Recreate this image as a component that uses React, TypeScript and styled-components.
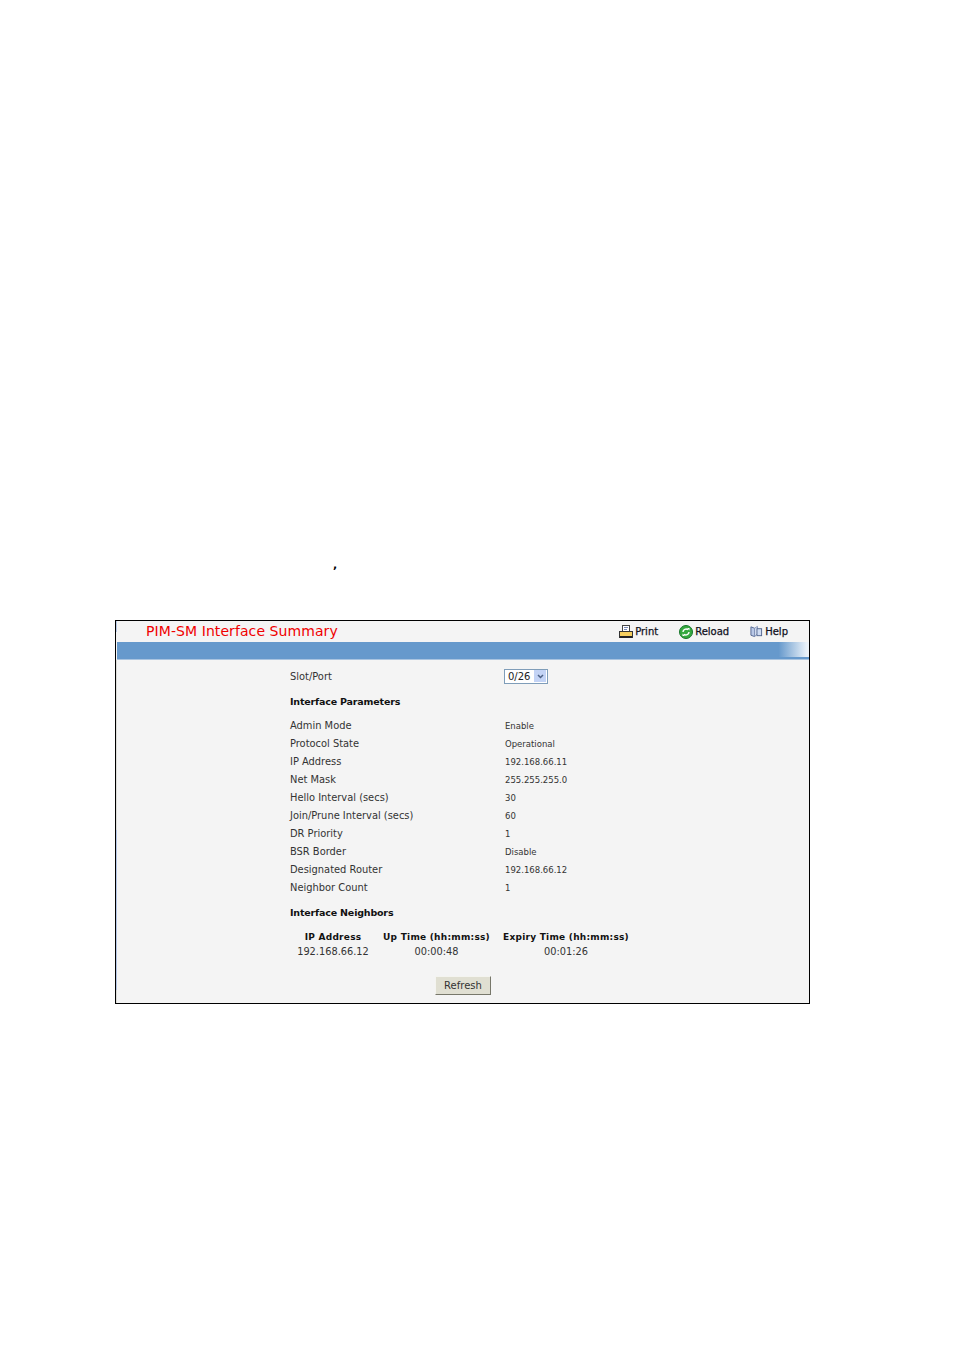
import React from "react";
import styled, { createGlobalStyle } from "styled-components";

const Global = createGlobalStyle`
  html, body { margin: 0; padding: 0; background: #fff; }
  body { font-family: "DejaVu Sans", Verdana, sans-serif; color: #222; }
`;

const Page = styled.div`
  width: 954px;
  height: 1350px;
  box-sizing: border-box;
  padding: 559px 0 0 115px;
`;

const Comma = styled.div`
  height: 61px;
  padding-left: 218px;
  font-size: 11px;
  line-height: 12px;
  color: #000;
  font-weight: bold;
`;

const Panel = styled.section`
  width: 695px;
  height: 384px;
  box-sizing: border-box;
  border: 1px solid #000;
  background:
    linear-gradient(
        180deg,
        #b9cbe8 0 11px,
        #f4f4f4 11px 39px,
        #dcdcd8 39px 209px,
        #b4c6e6 209px 369px,
        #dcdcd8 369px
      )
      0 0 / 1px 100% no-repeat,
    #f4f4f4;
  display: flex;
  flex-direction: column;
`;

const Header = styled.header`
  height: 21px;
  display: flex;
  align-items: center;
  justify-content: space-between;
  padding: 0 21px 0 30px;
`;

const Title = styled.h1`
  margin: 0;
  font-size: 14px;
  letter-spacing: 0.08px;
  font-weight: normal;
  color: #f00000;
  line-height: 21px;
`;

const Tools = styled.nav`
  display: flex;
  align-items: center;
  gap: 20px;
`;

const Tool = styled.span<{ $after?: number }>`
  display: flex;
  align-items: center;
  gap: 2px;
  margin-right: ${(p) => p.$after ?? 0}px;
  font-size: 10px;
  font-weight: 500;
  color: #10101c;
  -webkit-text-stroke: 0.25px #10101c;
`;

const Bar = styled.div`
  height: 15px;
  margin-left: 1px;
  background: linear-gradient(90deg, #6699cc 0, #6699cc 95.6%, #e8f0f8 99.6%, #f0f4f8 100%);
  border-bottom: 2px solid #6699cc;
  box-shadow: 0 1px 0 #a9c4e0;
`;

const Body = styled.div`
  padding: 8px 0 0 174px;
  display: flex;
  flex-direction: column;
  font-size: 9.900px;
  color: #333;
`;

const Row = styled.div`
  display: grid;
  grid-template-columns: 215px 1fr;
  height: 18px;
  align-items: center;
`;

const Value = styled.span`
  font-size: 8.500px;
  padding-top: 1px;
`;

const Heading = styled.h2<{ $top: number; $bottom: number }>`
  margin: ${(p) => p.$top}px 0 ${(p) => p.$bottom}px;
  font-size: 9.500px;
  letter-spacing: -0.18px;
  line-height: 14px;
  font-weight: bold;
  color: #111;
`;

const Select = styled.div`
  width: 44px;
  height: 15px;
  margin-left: -1px;
  box-sizing: border-box;
  border: 1px solid #7f9db9;
  background: #fff;
  display: flex;
  align-items: center;
  justify-content: space-between;
  padding: 0 1px 0 3px;
  font-size: 10px;
  color: #222;
`;

const Arrow = styled.span`
  width: 12px;
  height: 12px;
  background: #c3d3f5;
  display: flex;
  align-items: center;
  justify-content: center;
`;

const NeighborTable = styled.table`
  border-collapse: collapse;
  align-self: flex-start;
  table-layout: fixed;
  width: 345px;
  font-size: 9.800px;
  text-align: center;
  th, td { padding: 0; height: 14px; white-space: nowrap; }
  th { color: #111; font-size: 9px; letter-spacing: 0.25px; }
`;

const Col = styled.col<{ $w: number }>`
  width: ${(p) => p.$w}px;
`;

const Actions = styled.div`
  display: flex;
  justify-content: center;
  margin: 18px 0 0 -174px;
  padding-left: 1px;
`;

const RefreshButton = styled.button`
  width: 56px;
  height: 19px;
  padding: 0;
  font-family: inherit;
  font-size: 10px;
  color: #333;
  background: #e0dfd2;
  border: 1px solid;
  border-color: #f4f4f0 #77776a #77776a #f4f4f0;
`;

const PrintIcon = () => (
  <svg width="14" height="14" viewBox="0 0 14 14">
    <rect x="3.500" y="0.500" width="7" height="6" fill="#fff" stroke="#444" />
    <path d="M5 2.500h4M5 4.500h3" stroke="#7a8ab8" />
    <rect x="0.500" y="6.500" width="13" height="6" fill="#f6cf5e" stroke="#333" />
    <rect x="1" y="11" width="12" height="2" fill="#222" />
  </svg>
);

const ReloadIcon = () => (
  <svg width="14" height="14" viewBox="0 0 14 14">
    <circle cx="7" cy="7" r="6.500" fill="#35a83f" stroke="#17752a" />
    <path d="M4 7a3 3 0 0 1 5-2.200M10 7a3 3 0 0 1-5 2.200" stroke="#fff" strokeWidth="1.400" fill="none" />
    <path d="M8 3h2.500v2.500zM6 11H3.500V8.500z" fill="#fff" />
  </svg>
);

const HelpIcon = () => (
  <svg width="13" height="13" viewBox="0 0 14 13">
    <path d="M1 1.500l4 1.500v9l-4-1.500z" fill="#b9c8e6" stroke="#51658f" />
    <path d="M5 3l3-2v8l-3 3z" fill="#dfe7f6" stroke="#7d8fb5" />
    <rect x="7.500" y="3.500" width="5" height="7.500" fill="#cfdcf3" stroke="#51658f" />
  </svg>
);

const params: [string, string][] = [
  ["Admin Mode", "Enable"],
  ["Protocol State", "Operational"],
  ["IP Address", "192.168.66.11"],
  ["Net Mask", "255.255.255.0"],
  ["Hello Interval (secs)", "30"],
  ["Join/Prune Interval (secs)", "60"],
  ["DR Priority", "1"],
  ["BSR Border", "Disable"],
  ["Designated Router", "192.168.66.12"],
  ["Neighbor Count", "1"],
];

export default function App() {
  return (
    <Page>
      <Global />
      <Comma>,</Comma>
      <Panel>
        <Header>
          <Title>PIM-SM Interface Summary</Title>
          <Tools>
            <Tool $after={1}><PrintIcon />Print</Tool>
            <Tool $after={1}><ReloadIcon />Reload</Tool>
            <Tool><HelpIcon />Help</Tool>
          </Tools>
        </Header>
        <Bar />
        <Body>
          <Row>
            <span>Slot/Port</span>
            <Select>
              0/26
              <Arrow>
                <svg width="7" height="5" viewBox="0 0 7 5">
                  <path d="M1 1l2.500 2.500L6 1" stroke="#4d6185" strokeWidth="1.500" fill="none" />
                </svg>
              </Arrow>
            </Select>
          </Row>
          <Heading $top={10} $bottom={7}>Interface Parameters</Heading>
          {params.map(([k, v]) => (
            <Row key={k}>
              <span>{k}</span>
              <Value>{v}</Value>
            </Row>
          ))}
          <Heading $top={10} $bottom={10}>Interface Neighbors</Heading>
          <NeighborTable>
            <colgroup>
              <Col $w={86} />
              <Col $w={121} />
              <Col $w={138} />
            </colgroup>
            <thead>
              <tr>
                <th>IP Address</th>
                <th>Up Time (hh:mm:ss)</th>
                <th>Expiry Time (hh:mm:ss)</th>
              </tr>
            </thead>
            <tbody>
              <tr>
                <td>192.168.66.12</td>
                <td>00:00:48</td>
                <td>00:01:26</td>
              </tr>
            </tbody>
          </NeighborTable>
          <Actions>
            <RefreshButton>Refresh</RefreshButton>
          </Actions>
        </Body>
      </Panel>
    </Page>
  );
}
